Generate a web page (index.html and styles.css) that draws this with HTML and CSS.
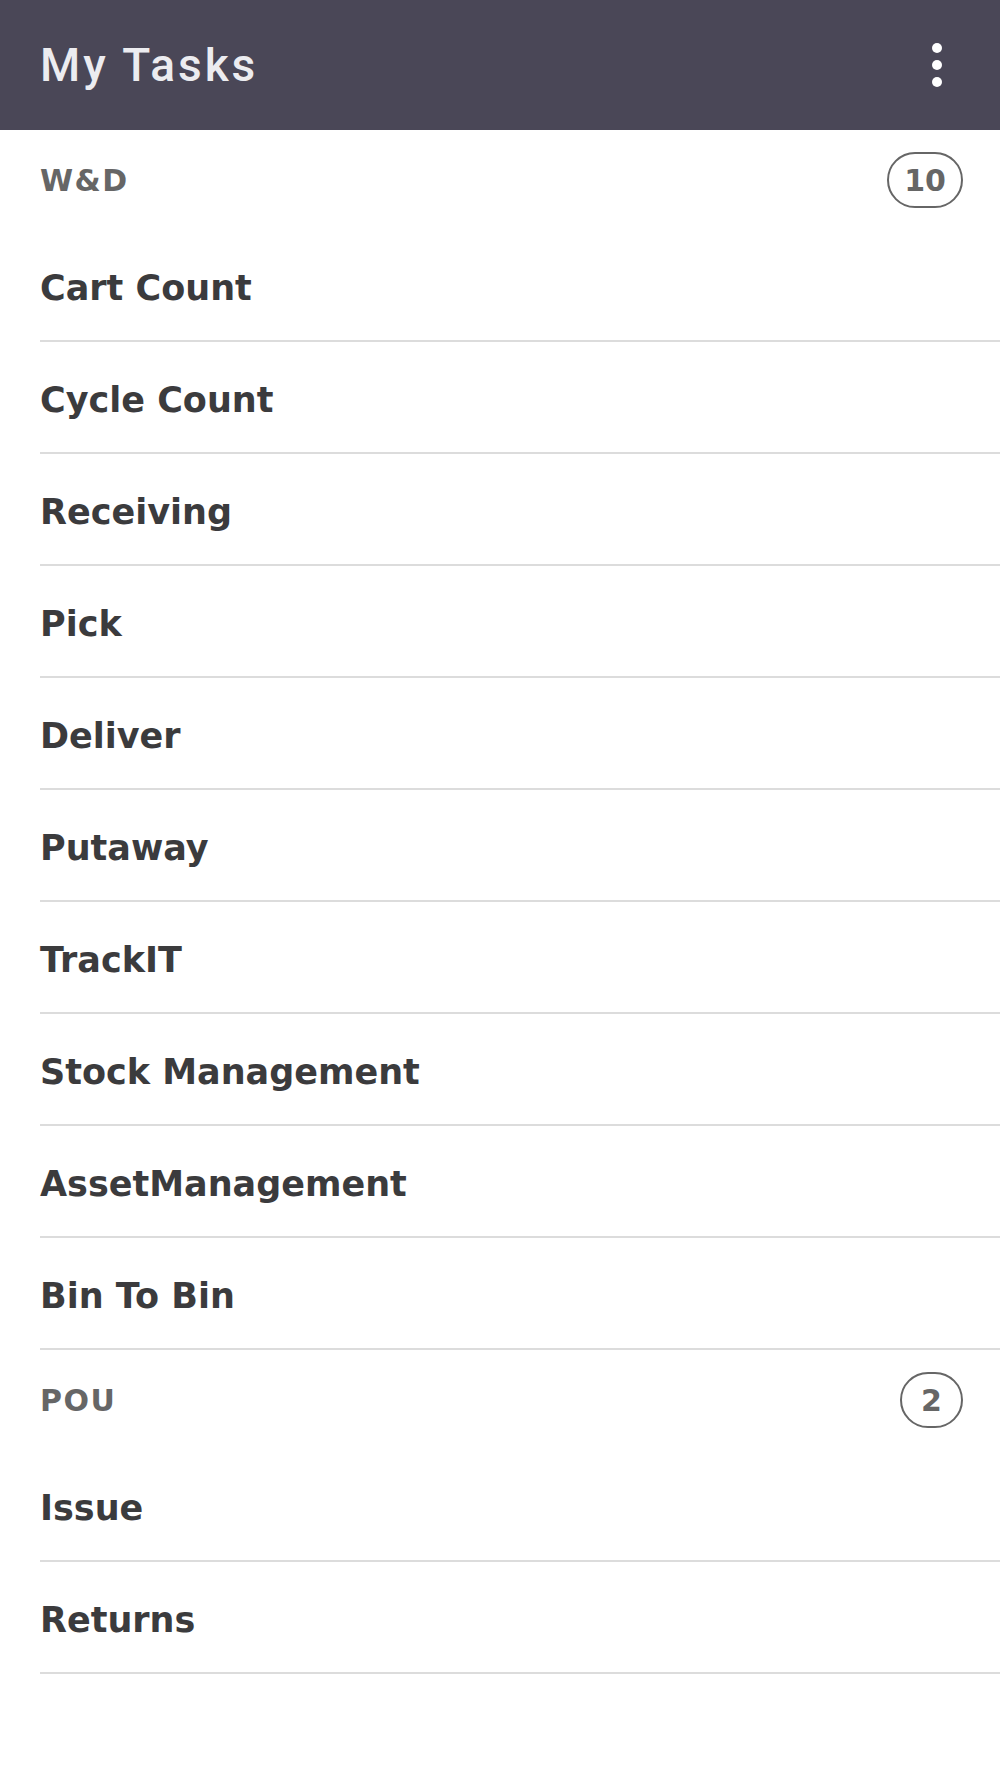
FILE: index.html
```html
<!DOCTYPE html>
<html lang="en">
<head>
    <meta charset="UTF-8">
    <meta name="viewport" content="width=device-width, initial-scale=1.0">
    <title>My Tasks</title>
    <link rel="stylesheet" href="styles.css">
</head>
<body>
    <header class="app-bar">
        <h1 class="app-title">My Tasks</h1>
        <button class="menu-btn" aria-label="More options">
            <span class="dot"></span>
            <span class="dot"></span>
            <span class="dot"></span>
        </button>
    </header>

    <main class="task-list">
        <section class="task-group">
            <div class="group-head">
                <span class="group-name">W&amp;D</span>
                <span class="group-count">10</span>
            </div>
            <ul class="task-items">
                <li class="task-item">Cart Count</li>
                <li class="task-item">Cycle Count</li>
                <li class="task-item">Receiving</li>
                <li class="task-item">Pick</li>
                <li class="task-item">Deliver</li>
                <li class="task-item">Putaway</li>
                <li class="task-item">TrackIT</li>
                <li class="task-item">Stock Management</li>
                <li class="task-item">AssetManagement</li>
                <li class="task-item">Bin To Bin</li>
            </ul>
        </section>

        <section class="task-group">
            <div class="group-head">
                <span class="group-name">POU</span>
                <span class="group-count">2</span>
            </div>
            <ul class="task-items">
                <li class="task-item">Issue</li>
                <li class="task-item">Returns</li>
            </ul>
        </section>
    </main>
</body>
</html>
```

FILE: styles.css
```css
body {
    margin: 0;
    font-family: 'DejaVu Sans', sans-serif;
    background-color: #fff;
}

.app-bar {
    height: 130px;
    padding: 0 40px;
    display: flex;
    align-items: center;
    justify-content: space-between;
    background-color: #4a4757;
    box-sizing: border-box;
}

.app-title {
    margin: 0;
    font-family: 'Roboto', sans-serif;
    font-size: 46px;
    font-weight: 500;
    letter-spacing: 3px;
    color: #ececf0;
}

.menu-btn {
    display: flex;
    flex-direction: column;
    align-items: center;
    gap: 7px;
    padding: 0;
    margin-right: 18px;
    border: none;
    background: none;
    cursor: pointer;
}

.dot {
    width: 10px;
    height: 10px;
    border-radius: 50%;
    background-color: #fff;
}

.group-head {
    height: 100px;
    margin-left: 40px;
    padding-right: 37px;
    display: flex;
    align-items: center;
    justify-content: space-between;
}

.group-name {
    font-size: 30px;
    font-weight: 700;
    letter-spacing: 1.5px;
    color: #666;
}

.group-count {
    min-width: 63px;
    height: 56px;
    padding: 0 15px;
    display: flex;
    align-items: center;
    justify-content: center;
    border: 2.5px solid #666;
    border-radius: 28px;
    font-size: 30px;
    font-weight: 700;
    color: #666;
    box-sizing: border-box;
}

.task-items {
    margin: 0;
    padding: 0;
    list-style: none;
}

.task-item {
    height: 112px;
    margin-left: 40px;
    padding-top: 6px;
    display: flex;
    align-items: center;
    border-bottom: 2px solid #dcdcdc;
    box-sizing: border-box;
    font-size: 35px;
    font-weight: 700;
    color: #3b3b3d;
}
```
